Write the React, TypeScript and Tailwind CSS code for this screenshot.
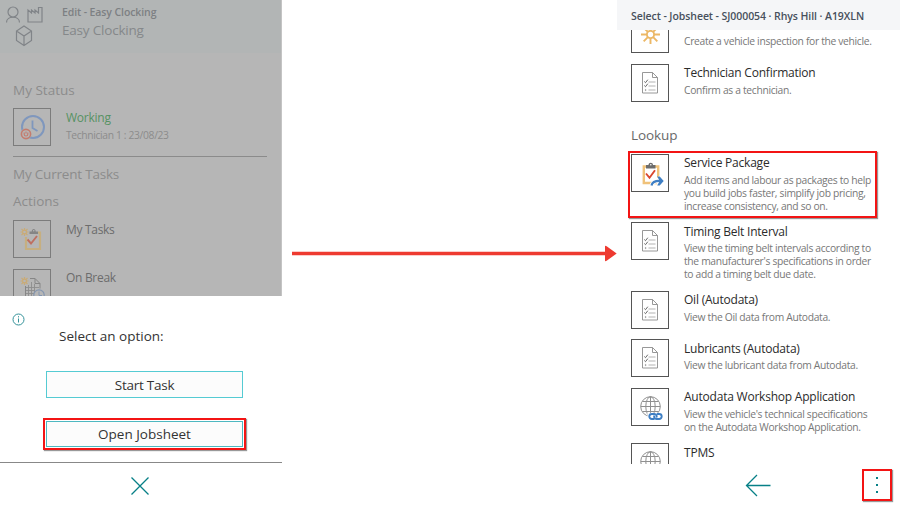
import type { ReactNode } from "react";

const box = "flex h-[38px] w-[38px] shrink-0 items-center justify-center border";

function DocIcon() {
  return (
    <svg width="18" height="24" viewBox="0 0 18 24" fill="none" stroke="#8c8c8c" strokeWidth="0.9">
      <path d="M1.500 1.500h10l5 5v15.500h-15zM11.500 1.500v5h5" />
      <path d="M7.500 11h7M7.500 15h7M7.500 19h7" stroke="#aaa" />
      <path d="M3.300 10.500l1.200 1.200 2.300-3M3.300 14.500l1.200 1.200 2.300-3" stroke="#555" />
      <circle cx="4.600" cy="19" r=".6" fill="#777" stroke="#777" strokeWidth=".3" />
    </svg>
  );
}

function Sun() {
  return (
    <svg width="19" height="19" viewBox="0 0 20 20" fill="none" stroke="#ecb866" strokeWidth="2">
      <circle cx="10" cy="10" r="3.800" />
      <path d="M10 0v6M10 14v6M0 10h6M14 10h6M2.800 2.800l4.400 4.400M12.800 12.800l4.400 4.400M17.200 2.800l-4.400 4.400M7.200 12.800l-4.400 4.400" />
    </svg>
  );
}

function PackageIcon() {
  return (
    <svg className="shrink-0" width="38" height="38" viewBox="0 0 38 38" fill="none">
      <path d="M12.800 12.500h14.400v16.500H12.800z" stroke="#f0c27a" strokeWidth="2.400" />
      <path d="M15 14.500V11h2.500c0-3 4.500-3 4.500 0h2.500v3.500z" fill="#6c6c6c" />
      <circle cx="19.800" cy="10.800" r=".8" fill="#fff" />
      <path d="M15 19.500l3.500 4.300 5.500-7.500" stroke="#d9472f" strokeWidth="1.900" />
      <path d="M20.500 31.500c.8-3.500 3.500-4.800 9-4.500M27 23l4.500 4-4.500 4" stroke="#fff" strokeWidth="4" />
      <path d="M20.500 31.500c.8-3.500 3.500-4.800 9-4.500" stroke="#3f7fc4" strokeWidth="2.200" />
      <path d="M26.200 22.500h2.500l4 4.500-4 4.500h-2.500l2.500-4.500z" fill="#3f7fc4" />
    </svg>
  );
}

function GlobeIcon() {
  return (
    <svg className="shrink-0" width="38" height="38" viewBox="0 0 38 38" fill="none">
      <g stroke="#909090" strokeWidth="1">
        <circle cx="19.500" cy="18.500" r="9.800" />
        <ellipse cx="19.500" cy="18.500" rx="4.700" ry="9.800" />
        <path d="M19.500 8.500v20M9.700 18.500h19.600M11.500 13.500h16M11.500 23.500h16" />
      </g>
      <path d="M16.500 24.800h15v8h-15z" fill="#fff" />
      <g stroke="#3f7fc4" strokeWidth="1.900">
        <path d="M23.500 31h-2.700a2.500 2.500 0 0 1 0-5h2.500c2 0 3 2 2 3.500" />
        <path d="M25.700 26h2.500a2.500 2.500 0 0 1 0 5h-2.700c-2 0-3-2-2-3.500" />
      </g>
    </svg>
  );
}

function ClockIcon() {
  return (
    <svg width="26" height="26" viewBox="0 0 26 26" fill="none">
      <circle cx="14" cy="13" r="11" stroke="#7f97bd" strokeWidth="2" />
      <path d="M13.500 6.500v7.500l5 3" stroke="#7f97bd" strokeWidth="1.800" />
      <circle cx="7" cy="20" r="5.500" fill="#b6b6b6" />
      <circle cx="7" cy="20" r="4.600" stroke="#c47c6e" strokeWidth="1.600" />
      <path d="M5.200 18.500v1.700a1.800 1.800 0 0 0 3.600 0v-1.700M7 17.500v2" stroke="#c47c6e" strokeWidth="1.200" />
    </svg>
  );
}

function Spark() {
  return (
    <g stroke="#caab76" strokeWidth="1.200">
      <circle cx="11.500" cy="12" r="1.900" />
      <path d="M11.500 8v2.200M11.500 13.800V16M7.500 12h2.200M13.300 12h2.200M8.500 9l1.700 1.700M12.800 13.300l1.700 1.700M14.500 9l-1.700 1.700M10.200 13.300L8.500 15" />
    </g>
  );
}

function TaskIcon() {
  return (
    <svg className="shrink-0" width="38" height="38" viewBox="0 0 38 38" fill="none">
      <path d="M13 17v12h14V12.500h-2" stroke="#c6af80" strokeWidth="2.200" />
      <path d="M16.500 14v-2.500h2.200c0-3.500 4-3.500 4 0H25V14z" fill="#858585" />
      <circle cx="20.700" cy="10.800" r=".8" fill="#b6b6b6" />
      <path d="M14.500 19.500l3.500 4 6-7.500" stroke="#be6f60" strokeWidth="1.900" />
      <Spark />
    </svg>
  );
}

function BreakIcon() {
  return (
    <svg className="shrink-0" width="38" height="38" viewBox="0 0 38 38" fill="none">
      <path d="M17 9.500h5l5 5v5M22 9.500v5h5M12.500 17v14h9" stroke="#868686" />
      <path d="M13 18.500h13M13 21.500h9M13 24.500h8M13 27.500h8M15.500 16v15M18.500 13v18M21.500 15v8" stroke="#8c8c8c" strokeWidth=".9" />
      <circle cx="26" cy="26" r="5.200" fill="#b6b6b6" stroke="#8496b0" strokeWidth="1.200" />
      <path d="M26 22.500v4h3" stroke="#8496b0" />
      <Spark />
    </svg>
  );
}

function Item({ icon, title, lines = [] }: { icon: ReactNode; title?: string; lines?: string[] }) {
  return (
    <div className="flex h-max min-h-[38.5px] shrink-0 gap-[15px]">
      <div className={`${box} border-[#555] bg-white`}>{icon}</div>
      <div className="-mb-[0.700px] whitespace-nowrap pt-[0.700px]">
        <div className="h-[19.500px] text-[12px] leading-[18px] tracking-[-0.22px] text-[#2b2b2b]">{title}</div>
        {lines.map((l) => (
          <div key={l} className="text-[10.300px] leading-[13px] tracking-[-0.32px] text-[#777]">{l}</div>
        ))}
      </div>
    </div>
  );
}

function Clocking() {
  return (
    <section className="flex h-[506px] w-[282px] shrink-0 flex-col whitespace-nowrap">
      <div className="h-[296px] shrink-0 overflow-hidden border-r border-[#c4c4c4] bg-[#b6b6b6]">
        <header className="flex h-[53px] bg-[#b2b5b5]">
          <svg className="shrink-0" width="62" height="53" fill="none" stroke="#808488" strokeWidth="1.200">
            <circle cx="13" cy="12" r="5" />
            <path d="M6.500 22.500c0-7 13-7 13 0M28 22V10l3.500 3v-3l3.500 3v-3l3.500 3V7.500H42V22z" />
            <path d="M24 26l7.500 5v9.500l-7.500 5-7.500-5V31zM16.500 31l7.500 5 7.500-5M24 36v9.500" />
          </svg>
          <div className="pt-[4px]">
            <div className="text-[10.500px] font-semibold leading-[16px] tracking-[-0.1px] text-[#7d8083]">Edit - Easy Clocking</div>
            <div className="text-[13.500px] leading-[20px] tracking-[-0.2px] text-[#85888a]">Easy Clocking</div>
          </div>
        </header>
        <div className="pl-[13px] pr-[14px] text-[#8c8c8c]">
          <h2 className="mt-[27px] h-[28px] text-[13.500px] leading-5">My Status</h2>
          <div className="flex h-[49px] gap-[15px] border-b border-[#8b8b8b]">
            <div className={`${box} border-[#7c7c7c]`}><ClockIcon /></div>
            <div className="pt-px">
              <div className="text-[12px] leading-[18px] tracking-[-0.25px] text-[#569263]">Working</div>
              <div className="text-[10.300px] leading-[16px] tracking-[-0.35px]">Technician 1 : 23/08/23</div>
            </div>
          </div>
          <h2 className="mt-[7px] h-[27px] text-[13.500px] leading-5 tracking-[-0.2px]">My Current Tasks</h2>
          <h2 className="h-[29px] text-[13.500px] leading-5">Actions</h2>
          <div className="flex h-[48.500px] gap-[15px]">
            <div className={`${box} border-[#7c7c7c]`}><TaskIcon /></div>
            <div className="pt-px text-[12px] leading-[18px] tracking-[-0.3px] text-[#6c6c6c]">My Tasks</div>
          </div>
          <div className="flex gap-[15px]">
            <div className={`${box} border-[#7c7c7c]`}><BreakIcon /></div>
            <div className="text-[12px] leading-[18px] tracking-[-0.3px] text-[#6c6c6c]">On Break</div>
          </div>
        </div>
      </div>
      <div className="flex h-[167px] shrink-0 flex-col border-b border-[#888] text-[13.500px] text-[#333]">
        <svg className="ml-3 mt-[17px] shrink-0" width="13" height="13" viewBox="0 0 13 13" fill="none" stroke="#339299">
          <circle cx="6.500" cy="6.500" r="5.500" />
          <path d="M6.500 5.500v4M6.500 3.200v1.200" />
        </svg>
        <p className="ml-[59px] leading-5">Select an option:</p>
        <button className="ml-[46px] mt-[25px] h-[27px] w-[197px] shrink-0 border border-[#55cbd3] bg-[#fcfcfc] pt-px leading-5 tracking-[-0.25px]">Start Task</button>
        <div className="ml-[43px] mt-[20px] h-[32px] w-[203px] shrink-0 border-2 border-[#f31414] p-px shadow-[1px_1px_1px_#999]">
          <button className="h-full w-full border border-[#4eb8c1] bg-[#fcfcfc]">Open Jobsheet</button>
        </div>
      </div>
      <div className="flex flex-1 justify-center pr-[2px] pt-[13px]">
        <svg width="20" height="20" fill="none" stroke="#078087" strokeWidth="1.300"><path d="M1.500 1.500l17 17M18.500 1.500l-17 17" /></svg>
      </div>
    </section>
  );
}

function Jobsheet() {
  return (
    <section className="flex h-[506px] w-[283px] shrink-0 flex-col">
      <header className="h-[30px] shrink-0 whitespace-nowrap bg-[#f5f6f8] pl-[14px] text-[10.500px] font-semibold leading-[32px] tracking-[-0.07px] text-[#47505c]">
        Select - Jobsheet - SJ000054 · Rhys Hill · A19XLN
      </header>
      <div className="flex h-[434px] shrink-0 flex-col justify-end overflow-hidden pl-[14px]">
        <div className="-mb-[17.800px] flex flex-col gap-[10px]">
          <Item icon={<Sun />} lines={["Create a vehicle inspection for the vehicle."]} />
          <Item icon={<DocIcon />} title="Technician Confirmation" lines={["Confirm as a technician."]} />
          <h2 className="-mb-[4px] mt-[12.500px] h-[20px] shrink-0 text-[13.500px] leading-5 tracking-[-0.1px] text-[#696969]">Lookup</h2>
          <div className="-ml-[3px] -mb-[5.500px] w-[249px] border-2 border-[#f31414] p-px pb-[3.500px] shadow-[1px_1px_1px_#999]">
            <Item icon={<PackageIcon />} title="Service Package" lines={["Add items and labour as packages to help", "you build jobs faster, simplify job pricing,", "increase consistency, and so on."]} />
          </div>
          <Item icon={<DocIcon />} title="Timing Belt Interval" lines={["View the timing belt intervals according to", "the manufacturer's specifications in order", "to add a timing belt due date."]} />
          <Item icon={<DocIcon />} title="Oil (Autodata)" lines={["View the Oil data from Autodata."]} />
          <Item icon={<DocIcon />} title="Lubricants (Autodata)" lines={["View the lubricant data from Autodata."]} />
          <Item icon={<GlobeIcon />} title="Autodata Workshop Application" lines={["View the vehicle's technical specifications", "on the Autodata Workshop Application."]} />
          <Item icon={<GlobeIcon />} title="TPMS" />
        </div>
      </div>
      <footer className="flex flex-1 items-start justify-end gap-[91px] pr-[8px] pt-[5px]">
        <svg className="mt-[5px]" width="26" height="23" fill="none" stroke="#078087" strokeWidth="1.300"><path d="M25.500 11.500H1.500M12 1L1.500 11.500 12 22" /></svg>
        <div className="flex h-[32px] w-[30px] flex-col items-center justify-center gap-[5px] border-2 border-[#f31414] shadow-[1px_1px_1px_#999]">
          <i className="size-[2px] bg-[#078087]" />
          <i className="size-[2px] bg-[#078087]" />
          <i className="size-[2px] bg-[#078087]" />
        </div>
      </footer>
    </section>
  );
}

export default function App() {
  return (
    <main className="flex h-[506px] w-[900px] overflow-hidden bg-white font-['Open_Sans','Noto_Sans',sans-serif]">
      <Clocking />
      <div className="flex w-[335px] shrink-0 pl-[10px] pt-[245px]">
        <svg width="325" height="17"><path d="M0 8.500h314" stroke="#ee3a30" strokeWidth="3.500" /><path d="M313 1.500q0-1.500 2 0l9 6.500q1 .5 0 1l-9 6.500q-2 1.500-2 0z" fill="#ee3a30" /></svg>
      </div>
      <Jobsheet />
    </main>
  );
}
